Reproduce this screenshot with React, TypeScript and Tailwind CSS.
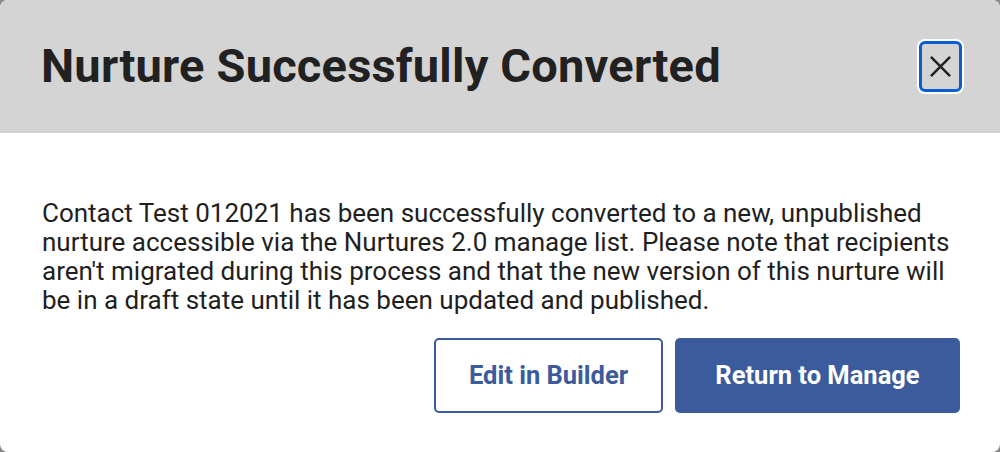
import React from 'react';

export default function App() {
  return (
    <div className="w-[1000px] h-[452px] bg-[#8a8a8a] font-['Roboto',sans-serif]">
      <div className="h-full rounded-[8px] overflow-hidden bg-white flex flex-col">
        {/* header */}
        <div className="h-[133px] bg-[#d4d4d4] flex items-center justify-between pl-[41px] pr-[36px]">
          <h1 className="text-[47px] font-bold text-[#212121] tracking-[0.2px]">Nurture Successfully Converted</h1>
          <button className="w-[47px] h-[55px] rounded-[8px] bg-white p-[2px] flex">
            <span className="flex-1 rounded-[6px] border-[3px] border-[#0a5fd0] bg-[#d4d4d4] flex items-center justify-center">
              <svg width="23" height="23" viewBox="0 0 24 24" fill="none" stroke="#222" strokeWidth="2.6">
                <path d="M2 2 L22 22 M22 2 L2 22" />
              </svg>
            </span>
          </button>
        </div>

        {/* body */}
        <div className="flex-1 pl-[42px] pr-[40px] pt-[66px]">
          <p className="text-[26px] leading-[29px] text-[#1f1f1f] max-w-[916px]">
            Contact Test 012021 has been successfully converted to a new, unpublished nurture accessible via the Nurtures 2.0 manage list. Please note that recipients aren't migrated during this process and that the new version of this nurture will be in a draft state until it has been updated and published.
          </p>
          <div className="flex justify-end gap-[12px] mt-[23px]">
            <button className="w-[229px] h-[75px] rounded-[5px] border-2 border-[#3b5b9c] text-[#3b5b9c] text-[25.5px] font-bold">
              Edit in Builder
            </button>
            <button className="w-[285px] h-[75px] rounded-[5px] bg-[#3b5b9c] text-white text-[25.5px] font-bold">
              Return to Manage
            </button>
          </div>
        </div>
      </div>
    </div>
  );
}
